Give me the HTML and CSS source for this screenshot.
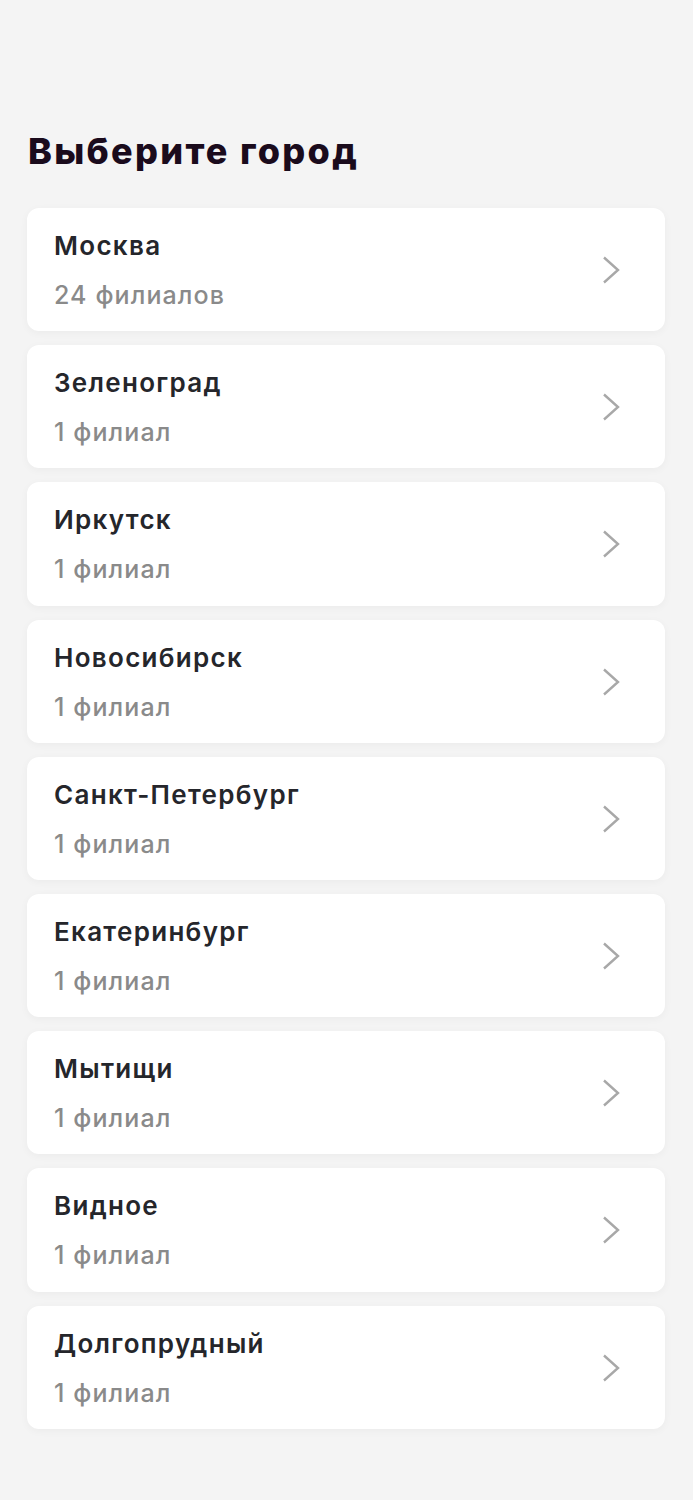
FILE: index.html
```html
<!DOCTYPE html>
<html lang="ru">
<head>
    <meta charset="UTF-8">
    <title>Выберите город</title>
    <link rel="stylesheet" href="styles.css">
</head>
<body>
    <div class="page">
        <h1 class="page-title">Выберите город</h1>

        <div class="city-list">
            <a class="city-card" href="#">
                <div class="city-info">
                    <div class="city-name">Москва</div>
                    <div class="city-count">24 филиалов</div>
                </div>
                <svg class="chevron" viewBox="0 0 18 28"><polyline points="2,1.5 16,14 2,26.5"/></svg>
            </a>
            <a class="city-card" href="#">
                <div class="city-info">
                    <div class="city-name">Зеленоград</div>
                    <div class="city-count">1 филиал</div>
                </div>
                <svg class="chevron" viewBox="0 0 18 28"><polyline points="2,1.5 16,14 2,26.5"/></svg>
            </a>
            <a class="city-card" href="#">
                <div class="city-info">
                    <div class="city-name">Иркутск</div>
                    <div class="city-count">1 филиал</div>
                </div>
                <svg class="chevron" viewBox="0 0 18 28"><polyline points="2,1.5 16,14 2,26.5"/></svg>
            </a>
            <a class="city-card" href="#">
                <div class="city-info">
                    <div class="city-name">Новосибирск</div>
                    <div class="city-count">1 филиал</div>
                </div>
                <svg class="chevron" viewBox="0 0 18 28"><polyline points="2,1.5 16,14 2,26.5"/></svg>
            </a>
            <a class="city-card" href="#">
                <div class="city-info">
                    <div class="city-name">Санкт-Петербург</div>
                    <div class="city-count">1 филиал</div>
                </div>
                <svg class="chevron" viewBox="0 0 18 28"><polyline points="2,1.5 16,14 2,26.5"/></svg>
            </a>
            <a class="city-card" href="#">
                <div class="city-info">
                    <div class="city-name">Екатеринбург</div>
                    <div class="city-count">1 филиал</div>
                </div>
                <svg class="chevron" viewBox="0 0 18 28"><polyline points="2,1.5 16,14 2,26.5"/></svg>
            </a>
            <a class="city-card" href="#">
                <div class="city-info">
                    <div class="city-name">Мытищи</div>
                    <div class="city-count">1 филиал</div>
                </div>
                <svg class="chevron" viewBox="0 0 18 28"><polyline points="2,1.5 16,14 2,26.5"/></svg>
            </a>
            <a class="city-card" href="#">
                <div class="city-info">
                    <div class="city-name">Видное</div>
                    <div class="city-count">1 филиал</div>
                </div>
                <svg class="chevron" viewBox="0 0 18 28"><polyline points="2,1.5 16,14 2,26.5"/></svg>
            </a>
            <a class="city-card" href="#">
                <div class="city-info">
                    <div class="city-name">Долгопрудный</div>
                    <div class="city-count">1 филиал</div>
                </div>
                <svg class="chevron" viewBox="0 0 18 28"><polyline points="2,1.5 16,14 2,26.5"/></svg>
            </a>
        </div>
    </div>
</body>
</html>
```

FILE: styles.css
```css
body {
    font-family: Inter, "Noto Sans", sans-serif;
    background-color: #f4f4f4;
    margin: 0;
}
.page {
    padding: 130px 28px 40px 27px;
}
.page-title {
    margin: 0 0 36px 1px;
    font-size: 36px;
    line-height: 42px;
    font-weight: 800;
    color: #1a0b1c;
    letter-spacing: 2.3px;
}
.city-list {
    display: flex;
    flex-direction: column;
    gap: 14px;
}
.city-card {
    display: flex;
    align-items: center;
    justify-content: space-between;
    background-color: #fff;
    border-radius: 12px;
    padding: 22px 45px 21.2px 27px;
    box-shadow: 0 2px 8px rgba(0, 0, 0, 0.04);
    text-decoration: none;
}
.city-name {
    font-size: 26px;
    line-height: 31px;
    font-weight: 600;
    color: #25262b;
    letter-spacing: 1.3px;
}
.city-count {
    margin-top: 19px;
    font-size: 25px;
    line-height: 30px;
    font-weight: 500;
    color: #8a8a8a;
    letter-spacing: 1.1px;
}
.chevron {
    width: 18px;
    height: 28px;
    fill: none;
    stroke: #a8a8a8;
    stroke-width: 2.4;
}
```
